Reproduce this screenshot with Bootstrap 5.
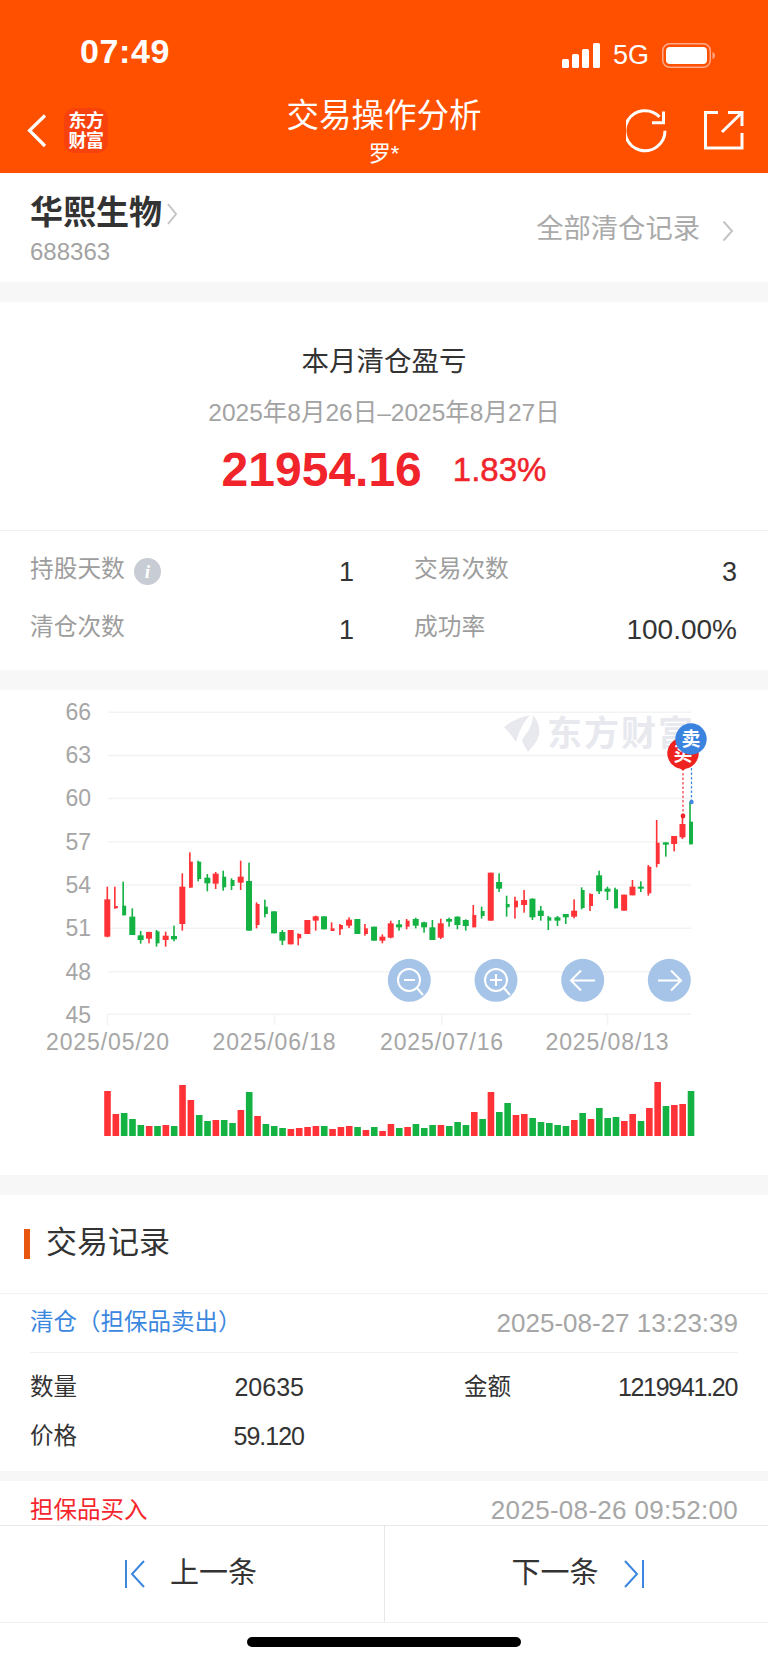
<!doctype html>
<html lang="zh">
<head>
<meta charset="utf-8">
<title>交易操作分析</title>
<link href="https://cdn.jsdelivr.net/npm/bootstrap@5.3.0/dist/css/bootstrap.min.css" rel="stylesheet">
<style>
html,body{background:#fff;}
body{width:768px;height:1663px;overflow:hidden;font-family:"Liberation Sans","Noto Sans CJK SC",sans-serif;color:#333;}
.top-bar{height:173px;background:#ff5000;color:#fff;position:relative;}
.status-row{height:100px;padding:31px 52px 0 80px;}
.clock{font-size:34px;line-height:40px;font-weight:700;letter-spacing:.6px;}
.status-icons{margin-top:8px;}
.net{font-size:27px;line-height:32px;margin:0 13px;}
.title-row{height:73px;}
.title-side{width:160px;}
.title-main{font-size:32.500px;line-height:40px;margin-top:-4px;}
.title-sub{font-size:22px;line-height:26px;margin-top:5px;}
.logo-tile{width:44px;height:45px;background:#f8420e;border-radius:10px;font-size:18px;line-height:20px;font-weight:700;text-align:center;padding-top:3px;letter-spacing:-.5px;}
.stock-row{height:109px;padding:6px 34px 0 30px;}
.stock-name{font-size:33px;line-height:40px;font-weight:700;margin-top:-2px;}
.stock-code{font-size:24px;line-height:30px;color:#a3a3a3;margin-top:4px;}
.all-link{font-size:27.300px;color:#aaa;margin-top:-2px;margin-right:22px;}
.band{height:20px;background:#f7f7f7;}
.summary{height:368px;}
.sum-head{height:229px;border-bottom:1px solid #f1f1f1;padding-top:41px;}
.sum-title{font-size:27.500px;line-height:38px;}
.sum-date{font-size:24.500px;line-height:32px;color:#a3a3a3;margin-top:16px;}
.sum-num{font-size:48px;line-height:56px;font-weight:700;color:#f0242a;}
.sum-pct{font-size:33px;font-weight:400;line-height:56px;color:#f0242a;margin-left:31px;-webkit-text-stroke:.5px #f0242a;}
.sum-nums{margin-top:13px;}
.stat-grid{padding:11px 31px 0 30px;}
.stat-row{height:58px;}
.stat-l{width:324px;}
.stat-r{width:323px;margin-left:60px;}
.stat-key{font-size:23.700px;color:#9d9d9d;margin-top:-2px;}
.stat-val{font-size:27px;color:#333;margin-top:2px;}
.stat-wide{font-size:28px;}
.tip-dot{width:27px;height:27px;border-radius:50%;background:#c8ccd4;color:#fff;font:italic 700 19px/27px "Liberation Serif",serif;text-align:center;margin-left:9px;}
.chart-box{height:485px;}
.chart-box svg{display:block;}
.ax{font-size:23px;fill:#a6a6a6;}
.mark-t{font-size:19px;font-weight:700;fill:#fff;}
.wm{font-size:35px;font-weight:700;fill:#e8e9ee;letter-spacing:2px;}
.clip-area{height:330px;overflow:hidden;}
.rec-head{height:98px;padding-left:24px;}
.rec-bar{width:6px;height:30px;background:#e8560f;margin-right:16px;}
.rec-title{font-size:31px;margin-top:-2px;}
.rec-item{border-top:1px solid #f3f3f3;padding:0 30px;height:178px;}
.rec-top{height:59px;border-bottom:1px solid #f1f1f1;}
.rec-type{font-size:23.500px;}
.c-sell{color:#3b87e0;}
.c-buy{color:#f5262d;}
.rec-time{font-size:26px;color:#a6a6a6;}
.time-wide{letter-spacing:.3px;}
.rec-line{height:49px;font-size:23.500px;}
.rec-top + .rec-line{margin-top:10px;}
.rec-k{flex:0 0 48px;white-space:nowrap;}
.rec-v{font-size:25px;flex:0 0 226px;text-align:right;}
.tight{letter-spacing:-1px;}
.rec-k2{margin-left:160px;flex:0 0 48px;white-space:nowrap;}
.rec-v2{font-size:25px;letter-spacing:-1.300px;margin-left:auto;margin-right:1px;}
.gap-band{height:10px;background:#f7f7f7;}
.rec-item2{padding:0 30px;height:60px;}
.rec-item2 .rec-top{border-bottom:0;height:59px;}
.pager{height:98px;border-top:1px solid #e8e8e8;border-bottom:1px solid #f0f0f0;}
.pager-cell{width:50%;font-size:29px;}
.pager-prev{padding-right:3px;}
.pager-next{padding-left:3px;border-left:1px solid #e8e8e8;}
.home-zone{height:41px;padding-top:14px;}
.home-bar{width:274px;height:10px;background:#000;border-radius:5px;}
</style>
</head>
<body>
<header class="top-bar">
  <div class="status-row d-flex align-items-start">
    <div class="clock">07:49</div>
    <div class="status-icons ms-auto d-flex align-items-center">
      <svg width="38" height="25" viewBox="0 0 38 25"><g fill="#fff"><rect x="0" y="16" width="7" height="9" rx="1.5"/><rect x="10" y="11" width="7" height="14" rx="1.5"/><rect x="20" y="6" width="7" height="19" rx="1.5"/><rect x="31" y="0" width="7" height="25" rx="1.5"/></g></svg>
      <span class="net">5G</span>
      <svg width="54" height="25" viewBox="0 0 54 25"><rect x=".75" y=".75" width="47.5" height="23.5" rx="7" fill="none" stroke="#ffa98a" stroke-width="1.5"/><rect x="4" y="4" width="41" height="17" rx="4" fill="#fff"/><path d="M50.5 9v7c1.6-.5 2.5-2 2.5-3.500s-.9-3-2.500-3.500z" fill="#ffa98a"/></svg>
    </div>
  </div>
  <div class="title-row d-flex justify-content-between">
    <div class="title-side d-flex align-items-start">
      <svg class="ms-4" width="24" height="73" viewBox="0 0 24 73"><path d="M21 15.500 5.500 30.500 21 46" fill="none" stroke="#fff" stroke-width="3.200"/></svg>
      <div class="logo-tile ms-3 mt-2">东方<br>财富</div>
    </div>
    <div class="text-center">
      <div class="title-main">交易操作分析</div>
      <div class="title-sub">罗*</div>
    </div>
    <div class="title-side d-flex justify-content-end align-items-start">
      <svg width="142" height="62" viewBox="626 100 142 62"><g fill="none" stroke="#fff" stroke-width="3"><path d="M665 130.700a20 20 0 1 1-5.500-13.800"/><path d="M652 122.700h11.500V111.500"/><path d="M718 112.500h-12.500v35.500h36.500v-15"/><path d="M728 112.500h14v13.500M741.500 113 722 132"/></g></svg>
    </div>
  </div>
</header>

<section class="stock-row d-flex justify-content-between align-items-center">
  <div>
    <div class="d-flex align-items-center">
      <span class="stock-name">华熙生物</span>
      <svg class="ms-1" width="12" height="24" viewBox="0 0 12 24"><path d="M2 2 10 12 2 22" fill="none" stroke="#c4c4c4" stroke-width="2"/></svg>
    </div>
    <div class="stock-code">688363</div>
  </div>
  <div class="d-flex align-items-center">
    <span class="all-link">全部清仓记录</span>
    <svg width="12" height="22" viewBox="0 0 12 22"><path d="M1.500 1.500 10 11 1.500 20.500" fill="none" stroke="#c4c4c4" stroke-width="2"/></svg>
  </div>
</section>
<div class="band"></div>

<section class="summary">
  <div class="sum-head text-center">
    <div class="sum-title">本月清仓盈亏</div>
    <div class="sum-date">2025年8月26日–2025年8月27日</div>
    <div class="sum-nums d-flex justify-content-center align-items-center">
      <span class="sum-num">21954.16</span><span class="sum-pct">1.83%</span>
    </div>
  </div>
  <div class="stat-grid">
    <div class="stat-row d-flex align-items-center">
      <div class="stat-l d-flex align-items-center"><span class="stat-key">持股天数</span><span class="tip-dot">i</span><span class="stat-val ms-auto">1</span></div>
      <div class="stat-r d-flex align-items-center"><span class="stat-key">交易次数</span><span class="stat-val ms-auto">3</span></div>
    </div>
    <div class="stat-row d-flex align-items-center">
      <div class="stat-l d-flex align-items-center"><span class="stat-key">清仓次数</span><span class="stat-val ms-auto">1</span></div>
      <div class="stat-r d-flex align-items-center"><span class="stat-key">成功率</span><span class="stat-val stat-wide ms-auto">100.00%</span></div>
    </div>
  </div>
</section>
<div class="band"></div>

<section class="chart-box">
  <svg id="kline" width="768" height="485" viewBox="0 690 768 485" xmlns="http://www.w3.org/2000/svg">
    <g id="grid" stroke="#f3f3f3" stroke-width="1.500">
      <line x1="108" x2="691" y1="712.300" y2="712.300"/><line x1="108" x2="691" y1="755.500" y2="755.500"/><line x1="108" x2="691" y1="798.500" y2="798.500"/><line x1="108" x2="691" y1="841.700" y2="841.700"/><line x1="108" x2="691" y1="885" y2="885"/><line x1="108" x2="691" y1="928.300" y2="928.300"/><line x1="108" x2="691" y1="971.700" y2="971.700"/><line x1="108" x2="691" y1="1014.300" y2="1014.300"/>
      <line x1="107.500" x2="107.500" y1="1014" y2="1025"/><line x1="274.500" x2="274.500" y1="1014" y2="1025"/><line x1="442" x2="442" y1="1014" y2="1025"/><line x1="607.500" x2="607.500" y1="1014" y2="1025"/>
    </g>
    <g class="ax" text-anchor="end">
      <text x="91" y="720">66</text><text x="91" y="763">63</text><text x="91" y="806">60</text><text x="91" y="850">57</text><text x="91" y="893">54</text><text x="91" y="936">51</text><text x="91" y="980">48</text><text x="91" y="1023">45</text>
    </g>
    <g class="ax" text-anchor="middle" letter-spacing=".9">
      <text x="108" y="1050">2025/05/20</text><text x="274.500" y="1050">2025/06/18</text><text x="442" y="1050">2025/07/16</text><text x="607.500" y="1050">2025/08/13</text>
    </g>
    <g id="wm">
      <path d="M504 727C512 720 522 717 530 715 524 722 520 728 516 742 512 736 508 731 504 727zM533 715C539 722 541 731 538 738 535 745 530 749 528 752 525 747 523 744 522 740 527 733 533 725 533 715z" fill="#e8e9ee"/>
      <text class="wm" x="547" y="746">东方财富</text>
    </g>
    <g id="candles"></g>
    <g id="vols"></g>
    <g id="tools" fill="#a5c4e7">
      <circle cx="409.300" cy="980.300" r="21.500"/><circle cx="496" cy="980.300" r="21.500"/><circle cx="582.700" cy="980.300" r="21.500"/><circle cx="669.300" cy="980.300" r="21.500"/>
      <g fill="none" stroke="#fff" stroke-width="2">
        <circle cx="409" cy="980" r="11"/><path d="M404 980h11M417 988l6 7"/>
        <circle cx="496" cy="980" r="11"/><path d="M490 980h12M496 974v12M504 988l6 7"/>
        <path d="M571 980.500h24M581 970.500l-10 10 10 10"/>
        <path d="M658 980.500h23M671 970.500l10 10-10 10"/>
      </g>
    </g>
    <g id="marks">
      <path d="M683 816V771" stroke="#f0464a" stroke-width="1.300" stroke-dasharray="2.500 2" fill="none"/>
      <path d="M691.500 802V755" stroke="#3f88e3" stroke-width="1.300" stroke-dasharray="2.500 2" fill="none"/>
      <circle cx="683" cy="816" r="2.400" fill="#f0242a"/><circle cx="691.500" cy="802" r="2.200" fill="#3f88e3"/>
      <path d="M683 771c-1-1.500-2.500-2.500-5-2.800a15.700 15.700 0 1 1 10 0c-2.500.3-4 1.300-5 2.800z" fill="#ee2320"/>
      <text class="mark-t" x="683" y="761" text-anchor="middle">买</text>
      <circle cx="691" cy="739" r="15.700" fill="#3a84e0"/>
      <text class="mark-t" x="691" y="746" text-anchor="middle">卖</text>
    </g>
  </svg>
</section>
<div class="band"></div>

<section class="clip-area">
  <div class="rec-head d-flex align-items-center">
    <span class="rec-bar"></span><span class="rec-title">交易记录</span>
  </div>
  <div class="rec-item">
    <div class="rec-top d-flex justify-content-between align-items-center">
      <span class="rec-type c-sell">清仓（担保品卖出）</span>
      <span class="rec-time">2025-08-27 13:23:39</span>
    </div>
    <div class="rec-line d-flex align-items-center"><span class="rec-k">数量</span><span class="rec-v">20635</span><span class="rec-k2">金额</span><span class="rec-v2">1219941.20</span></div>
    <div class="rec-line d-flex align-items-center"><span class="rec-k">价格</span><span class="rec-v tight">59.120</span></div>
  </div>
  <div class="gap-band"></div>
  <div class="rec-item2">
    <div class="rec-top d-flex justify-content-between align-items-center">
      <span class="rec-type c-buy">担保品买入</span>
      <span class="rec-time time-wide">2025-08-26 09:52:00</span>
    </div>
  </div>
</section>

<nav class="pager d-flex">
  <div class="pager-cell pager-prev d-flex align-items-center justify-content-center">
    <svg class="me-4" width="22" height="28" viewBox="0 0 22 28"><path d="M2 0v28M20 1 8 14l12 13" fill="none" stroke="#3b87e0" stroke-width="2"/></svg>
    <span>上一条</span>
  </div>
  <div class="pager-cell pager-next d-flex align-items-center justify-content-center">
    <span>下一条</span>
    <svg class="ms-4" width="22" height="28" viewBox="0 0 22 28"><path d="M20 0v28M2 1l12 13L2 27" fill="none" stroke="#3b87e0" stroke-width="2"/></svg>
  </div>
</nav>
<div class="home-zone d-flex justify-content-center"><div class="home-bar"></div></div>

<script>
/* candle data: colour, wick top, body top, body bottom, wick bottom */
var K=[
"R 620 658 770 772","R 620 678 685 686","G 605 677 706 706","G 685 710 765 765","G 753 766 780 791","R 755 756 776 790","G 750 754 790 800","R 755 767 780 800","G 737 768 778 784","R 580 620 732 752",
"R 517 545 623 623","G 542 545 597 604","G 582 593 610 634","R 576 581 611 627","G 572 590 622 632","G 595 600 618 630","R 542 590 608 630","G 548 603 752 752","R 667 672 735 745","G 659 680 702 712",
"G 694 694 760 760","G 750 756 782 795","R 750 750 793 793","R 760 762 775 796","R 720 720 762 762","R 707 709 722 752","G 709 709 748 748","R 727 745 753 753","R 732 735 748 765","R 712 719 737 744",
"G 717 717 762 762","R 732 745 762 767","G 740 740 782 782","R 763 770 782 790","R 722 730 773 775","G 720 733 742 752","R 717 722 740 748","G 713 717 737 745","G 725 727 742 758","G 720 742 780 780",
"R 716 730 773 777","G 713 717 725 740","G 709 710 735 748","G 718 720 738 752","R 675 705 742 742","G 680 693 708 716","R 578 578 722 722","G 580 606 626 636","G 647 672 682 710","R 650 662 682 716",
"R 630 660 675 698","G 655 656 712 720","G 678 692 708 722","G 708 712 722 750","G 708 712 722 738","G 702 702 712 732","R 658 692 710 715","G 622 630 684 688","R 640 642 678 693","G 572 586 634 642",
"G 620 626 635 660","G 623 628 685 685","R 644 644 692 692","R 600 620 646 646","G 604 620 626 636","R 555 560 640 647","R 420 488 552 562","G 487 487 494 530","R 468 468 492 514","R 405 432 472 477","G 366 425 493 493"];
var NARROW={1:1,2:1,6:1,10:1,11:1,14:1,15:1,18:1,19:1,23:1,27:1,28:1,31:1,36:1,44:1,45:1,48:1,49:1,53:1,57:1,58:1,61:1,65:1,66:1,70:1};
var V="R45 R22 G23 G17 G11 R10 G10 R11 G10 R51 R36 G21 G15 R16 G16 G13 R26 G44 R20 G12 G10 G8 R7 R8 R9 R10 G10 R7 R9 R10 G9 R6 G9 R5 R12 G8 R9 G12 G8 G11 R11 G10 G14 G11 R24 G17 R44 G24 G33 R21 R22 G18 G14 G13 G11 G10 R16 G23 R17 G28 G18 G19 R15 R22 G15 R28 R54 G30 R31 R32 G45".split(" ");
var COL={R:"#fe3237",G:"#14b143"};
var NS="http://www.w3.org/2000/svg";
function rect(p,x,y,w,h,c){var r=document.createElementNS(NS,"rect");r.setAttribute("x",x);r.setAttribute("y",y);r.setAttribute("width",w);r.setAttribute("height",Math.max(h,1));r.setAttribute("fill",c);p.appendChild(r);}
var gc=document.getElementById("candles"),gv=document.getElementById("vols");
K.forEach(function(s,i){var a=s.split(" "),cx=107.3+i*8.336,c=COL[a[0]];
  var y=function(v){return 680+(+v)/3;};
  if(NARROW[i]){
    rect(gc,cx-1.6,y(a[1]),1.6,y(a[4])-y(a[1]),c);
    rect(gc,cx-1.6,y(a[2]),3.8,y(a[3])-y(a[2]),c);
  }else{
    rect(gc,cx-.8,y(a[1]),1.6,y(a[4])-y(a[1]),c);
    rect(gc,cx-3,y(a[2]),6,y(a[3])-y(a[2]),c);
  }
});
V.forEach(function(s,i){var cx=107.5+i*8.336;rect(gv,cx-3.3,1136-(+s.slice(1)),6.6,+s.slice(1),COL[s[0]]);});
</script>
<script src="https://cdn.jsdelivr.net/npm/bootstrap@5.3.0/dist/js/bootstrap.bundle.min.js"></script>
</body>
</html>
